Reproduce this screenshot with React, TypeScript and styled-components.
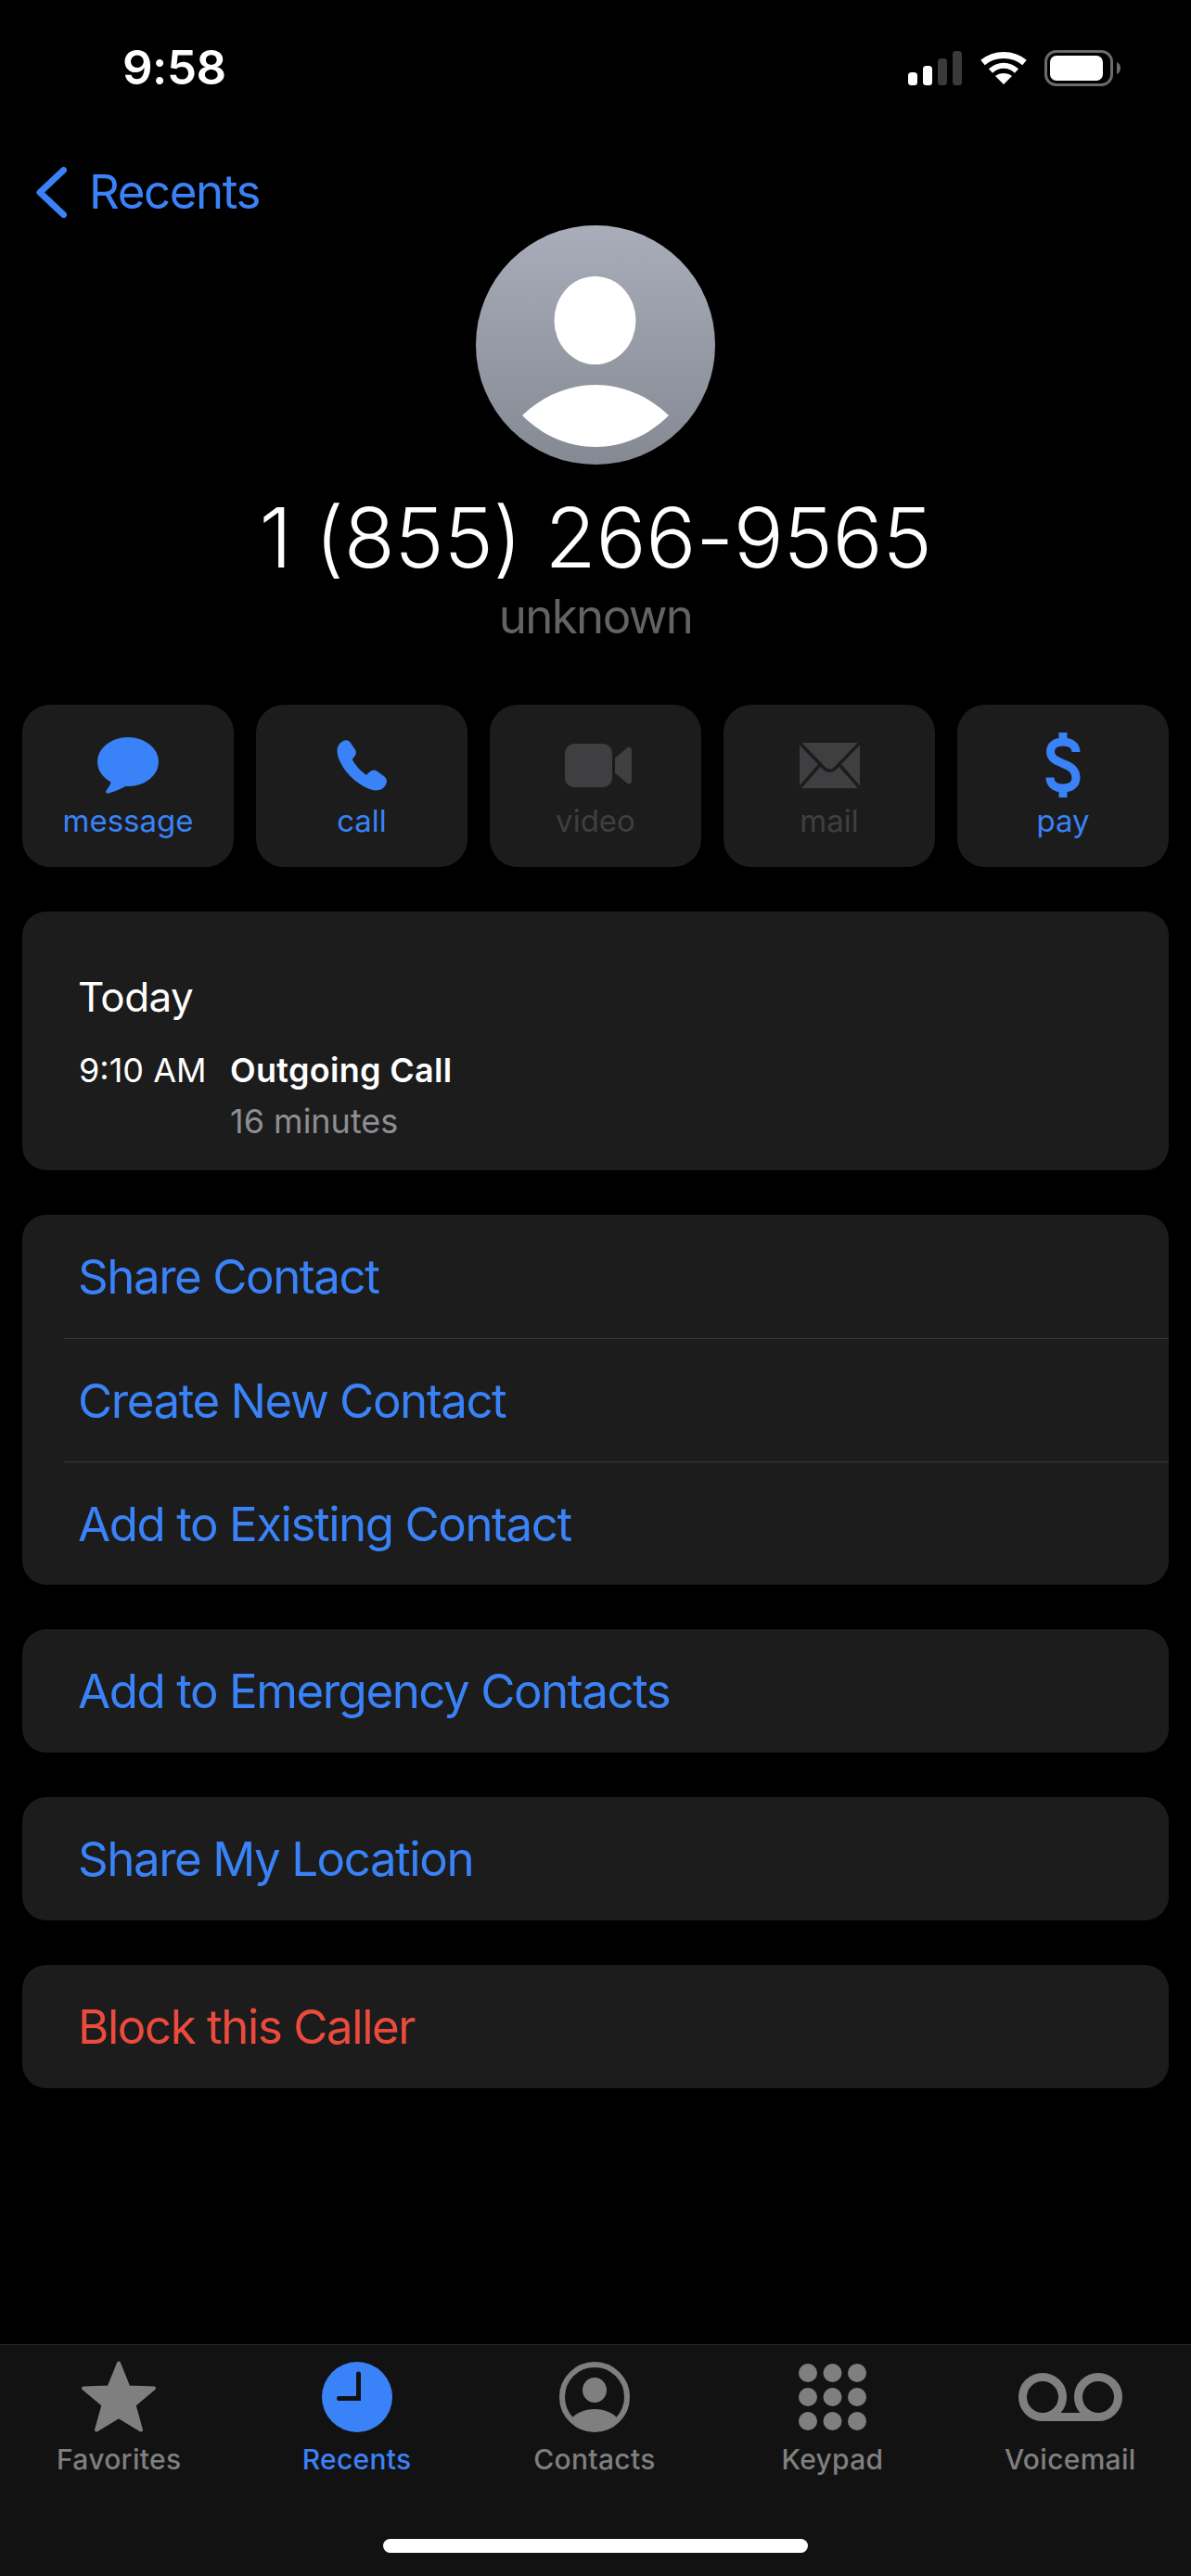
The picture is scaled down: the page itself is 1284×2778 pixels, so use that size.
import React from "react";
import styled, { createGlobalStyle } from "styled-components";

const BLUE = "#3a82f7";
const CARD = "#1c1c1c";
const MUTED = "#3f3f41";
const TAB_GREY = "#7f7f7f";

const Global = createGlobalStyle`
  html, body { margin: 0; padding: 0; background: #000; }
  * { box-sizing: border-box; }
`;

const Page = styled.div`
  width: 1284px;
  height: 2778px;
  display: flex;
  flex-direction: column;
  overflow: hidden;
  background: #000;
  font-family: Inter, "Liberation Sans", sans-serif;
  color: #fff;
`;

const StatusBar = styled.header`
  height: 146px;
  flex: none;
  display: flex;
  align-items: center;
  justify-content: space-between;
  padding: 0 76px 0 132px;
`;

const Clock = styled.span`
  font-size: 51px;
  font-weight: 600;
  line-height: 60px;
  letter-spacing: -0.5px;
`;

const StatusIcons = styled.div`
  display: flex;
  align-items: center;
  gap: 20px;
`;

const NavBar = styled.nav`
  flex: none;
  height: 97px;
  padding: 25px 0 0 39px;
  display: flex;
  align-items: center;
  gap: 24px;
  color: ${BLUE};
`;

const NavLabel = styled.span`
  font-size: 51px;
  line-height: 72px;
  letter-spacing: -1.4px;
`;

const Hero = styled.section`
  flex: none;
  display: flex;
  flex-direction: column;
  align-items: center;
`;

const PhoneNumber = styled.h1`
  margin: 29px 0 0;
  font-size: 90px;
  font-weight: 350;
  line-height: 100px;
  letter-spacing: -0.3px;
`;

const Subtitle = styled.div`
  margin-top: 5px;
  font-size: 51px;
  line-height: 60px;
  letter-spacing: -1.6px;
  color: #636366;
`;

const Actions = styled.div`
  flex: none;
  margin-top: 65px;
  padding: 0 24px;
  display: grid;
  grid-template-columns: repeat(5, 1fr);
  gap: 24px;
`;

const ActionButton = styled.div<{ $off?: boolean }>`
  height: 175px;
  padding-top: 30px;
  border-radius: 30px;
  background: ${CARD};
  display: flex;
  flex-direction: column;
  align-items: center;
  color: ${(p) => (p.$off ? MUTED : BLUE)};
`;

const ActionIcon = styled.div`
  height: 70px;
  display: flex;
  align-items: center;
  justify-content: center;
`;

const ActionLabel = styled.span`
  padding-top: 3px;
  font-size: 33px;
  line-height: 44px;
`;

const Card = styled.section`
  flex: none;
  margin: 48px 24px 0;
  border-radius: 26px;
  background: ${CARD};
  overflow: hidden;
`;

const History = styled.div`
  padding: 65px 0 31px 61px;
`;

const HistoryDay = styled.div`
  margin-left: -1px;
  font-size: 44px;
  line-height: 54px;
  letter-spacing: -0.6px;
`;

const CallEntry = styled.div`
  margin-top: 30px;
  display: grid;
  grid-template-columns: 163px 1fr;
  row-gap: 11px;
  font-size: 36px;
  line-height: 44px;
`;

const CallType = styled.span`
  font-weight: 600;
  letter-spacing: 0.3px;
`;

const CallLength = styled.span`
  grid-column: 2;
  color: #8e8e93;
`;

const Row = styled.div<{ $danger?: boolean }>`
  height: 133px;
  margin-left: 45px;
  padding-left: 15px;
  display: flex;
  align-items: center;
  font-size: 51px;
  letter-spacing: -1.45px;
  color: ${(p) => (p.$danger ? "#eb4a3c" : BLUE)};
  & + & {
    border-top: 1px solid #38383a;
  }
`;

const TabBar = styled.footer`
  flex: none;
  margin-top: auto;
  height: 250px;
  padding-top: 15px;
  background: #121212;
  border-top: 1px solid #2a2a2c;
`;

const Tabs = styled.div`
  padding-right: 2px;
  display: grid;
  grid-template-columns: repeat(5, 1fr);
`;

const Tab = styled.div<{ $active?: boolean }>`
  display: flex;
  flex-direction: column;
  align-items: center;
  color: ${(p) => (p.$active ? BLUE : TAB_GREY)};
`;

const TabIcon = styled.div`
  height: 81px;
  display: flex;
  align-items: center;
  justify-content: center;
`;

const TabLabel = styled.span`
  margin-top: 9px;
  font-size: 30px;
  font-weight: 500;
  line-height: 36px;
  letter-spacing: 0.3px;
`;

const HomeBar = styled.div`
  width: 458px;
  height: 15px;
  margin: 68px auto 0;
  border-radius: 8px;
  background: #fff;
`;

const Signal = () => (
  <svg width="58" height="37" viewBox="0 0 58 37">
    <rect x="0" y="23" width="10" height="14" rx="3.5" fill="#fff" />
    <rect x="16" y="16" width="10" height="21" rx="3.5" fill="#fff" />
    <rect x="32" y="8" width="10" height="29" rx="3.5" fill="#3a3a3a" />
    <rect x="48" y="0" width="10" height="37" rx="3.5" fill="#3a3a3a" />
  </svg>
);

const Wifi = () => (
  <svg width="50" height="35" viewBox="0 0 50 35" fill="none" stroke="#fff">
    <path d="M2.5 11.5C8.5 6.5 16.5 3.5 25 3.5C33.5 3.5 41.5 6.5 47.5 11.5" strokeWidth="7" />
    <path d="M11 20.5C15 16.8 20 14.8 25 14.8C30 14.8 35 16.8 39 20.5" strokeWidth="6" />
    <path d="M25 35L16 26C18.5 24 21.5 23 25 23C28.5 23 31.5 24 34 26Z" fill="#fff" stroke="none" />
  </svg>
);

const Battery = () => (
  <svg width="82" height="39" viewBox="0 0 82 39" style={{ marginLeft: -1 }}>
    <rect x="1.5" y="1.5" width="71" height="36" rx="11" fill="none" stroke="#6b6b6b" strokeWidth="3" />
    <rect x="6" y="6" width="57" height="27" rx="7" fill="#fff" />
    <path d="M78 13C80.5 14 82 16.5 82 19.5C82 22.5 80.5 25 78 26Z" fill="#6b6b6b" />
  </svg>
);

const Chevron = () => (
  <svg width="33" height="55" viewBox="0 0 33 55" fill="none" stroke="currentColor" strokeWidth="7" strokeLinecap="round" strokeLinejoin="round">
    <path d="M29.5 3.5L4 27.5L29.5 51.5" />
  </svg>
);

const Avatar = () => (
  <svg width="258" height="258" viewBox="0 0 258 258">
    <defs>
      <linearGradient id="avatarFill" x1="0" y1="0" x2="0" y2="1">
        <stop offset="0" stopColor="#a9adb9" />
        <stop offset="1" stopColor="#858993" />
      </linearGradient>
    </defs>
    <circle cx="129" cy="129" r="129" fill="url(#avatarFill)" />
    <ellipse cx="128.5" cy="102.5" rx="44" ry="47.5" fill="#fff" />
    <path d="M50 205C72 184 100 172 129 172C158 172 186 184 208 205C186 227 158 239 129 239C100 239 72 227 50 205Z" fill="#fff" />
  </svg>
);

const MessageIcon = () => (
  <svg width="66" height="61" viewBox="0 0 66 61" fill="currentColor">
    <ellipse cx="33" cy="26.5" rx="33" ry="26.5" />
    <path d="M15 46C14.5 51 11.5 55 9.5 57.5C8.5 59.8 10 61 12 60.5C18 59 25 56 31 52.5Z" />
  </svg>
);

const CallIcon = () => (
  <svg width="55" height="56" viewBox="0 -1 55 56" fill="currentColor">
    <path d="M0.5 12C0.5 7 3 2.5 8 0.7C10.5 -0.2 12.8 0.6 14.5 2.5L20 10.5C21.5 13 21 16 19 18L16.7 21C18.5 24.5 21 27.5 23.5 30.5C26 33 29 35.8 32 37.8L35.5 34.5C37.5 32.3 40.5 31.8 43 33.3L51.5 39.5C53.5 41 54.5 44 53.7 46.5C52 51.5 47.5 54.5 42 54.5C34 54 24 48 16.5 40.8C8 33 0.7 21 0.5 12Z" />
  </svg>
);

const VideoIcon = () => (
  <svg width="78" height="47" viewBox="-6 0 78 47" fill="currentColor">
    <rect x="0" y="0" width="51" height="47" rx="10" />
    <path d="M54 15.5L67 4.5C69 3 72 4 72 7V40C72 43 69 44 67 42.5L54 31.5Z" />
  </svg>
);

const MailIcon = () => (
  <svg width="65" height="49" viewBox="0 0 65 49">
    <rect width="65" height="49" rx="3" fill="currentColor" />
    <g fill="none" stroke={CARD} strokeWidth="3.5" strokeLinejoin="round">
      <path d="M-1 -1L27 28C30 31 35 31 38 28L66 -1" />
      <path d="M-1 50L22.5 23" />
      <path d="M66 50L42.5 23" />
    </g>
  </svg>
);

const PayIcon = () => (
  <svg width="38" height="70" viewBox="-1 0 38 70" fill="none" stroke="currentColor" strokeWidth="9">
    <path d="M18 0V10M18 60V70" />
    <path d="M32 21C32 14 26 10 18 10C10 10 4.5 14 4.5 20.5C4.5 28 11 30.5 18 33.5C26 36.5 32 40 32 49C32 56 26 60 18 60C10 60 4 56 4 48.5" />
  </svg>
);

const StarIcon = () => (
  <svg width="82" height="77" viewBox="0 0 82 77" fill="currentColor" stroke="currentColor" strokeWidth="4" strokeLinejoin="round">
    <polygon points="41,2.5 51.5,28.5 79,29.5 57.5,47.5 65,74.5 41,60 17,74.5 24.5,47.5 3,29.5 30.5,28.5" />
  </svg>
);

const ClockIcon = () => (
  <svg width="76" height="76" viewBox="0 0 76 76">
    <circle cx="38" cy="38" r="38" fill="currentColor" />
    <path d="M39.5 13V39.5H18.5" fill="none" stroke="#121212" strokeWidth="5" strokeLinecap="round" />
  </svg>
);

const ContactIcon = () => (
  <svg width="76" height="76" viewBox="0 0 76 76" fill="currentColor">
    <circle cx="38" cy="38" r="35" fill="none" stroke="currentColor" strokeWidth="6" />
    <ellipse cx="38" cy="30.5" rx="13" ry="13.5" />
    <path d="M12.5 62C18 55 27 51 38 51C49 51 58 55 63.5 62C57 69.5 48 74 38 74C28 74 19 69.5 12.5 62Z" />
  </svg>
);

const KeypadIcon = () => (
  <svg width="73" height="72" viewBox="0 0 73 72" fill="currentColor">
    {[10, 36, 62].map((cy) =>
      [10, 36.5, 63].map((cx) => <circle key={`${cx}-${cy}`} cx={cx} cy={cy} r="10" />)
    )}
  </svg>
);

const VoicemailIcon = () => (
  <svg width="112" height="52" viewBox="0 0 112 52" fill="none" stroke="currentColor" strokeWidth="9">
    <circle cx="26" cy="26" r="21.5" />
    <circle cx="86" cy="26" r="21.5" />
    <path d="M26 47.5H86" />
  </svg>
);

const actions = [
  { label: "message", icon: <MessageIcon /> },
  { label: "call", icon: <CallIcon /> },
  { label: "video", icon: <VideoIcon />, off: true },
  { label: "mail", icon: <MailIcon />, off: true },
  { label: "pay", icon: <PayIcon /> },
];

const tabs = [
  { label: "Favorites", icon: <StarIcon /> },
  { label: "Recents", icon: <ClockIcon />, active: true },
  { label: "Contacts", icon: <ContactIcon /> },
  { label: "Keypad", icon: <KeypadIcon /> },
  { label: "Voicemail", icon: <VoicemailIcon /> },
];

export default function App() {
  return (
    <Page>
      <Global />
      <StatusBar>
        <Clock>9:58</Clock>
        <StatusIcons>
          <Signal />
          <Wifi />
          <Battery />
        </StatusIcons>
      </StatusBar>
      <NavBar>
        <Chevron />
        <NavLabel>Recents</NavLabel>
      </NavBar>
      <Hero>
        <Avatar />
        <PhoneNumber>1 (855) 266-9565</PhoneNumber>
        <Subtitle>unknown</Subtitle>
      </Hero>
      <Actions>
        {actions.map((a) => (
          <ActionButton key={a.label} $off={a.off}>
            <ActionIcon>{a.icon}</ActionIcon>
            <ActionLabel>{a.label}</ActionLabel>
          </ActionButton>
        ))}
      </Actions>
      <Card>
        <History>
          <HistoryDay>Today</HistoryDay>
          <CallEntry>
            <span>9:10 AM</span>
            <CallType>Outgoing Call</CallType>
            <CallLength>16 minutes</CallLength>
          </CallEntry>
        </History>
      </Card>
      <Card>
        <Row>Share Contact</Row>
        <Row>Create New Contact</Row>
        <Row>Add to Existing Contact</Row>
      </Card>
      <Card>
        <Row>Add to Emergency Contacts</Row>
      </Card>
      <Card>
        <Row>Share My Location</Row>
      </Card>
      <Card>
        <Row $danger>Block this Caller</Row>
      </Card>
      <TabBar>
        <Tabs>
          {tabs.map((t) => (
            <Tab key={t.label} $active={t.active}>
              <TabIcon>{t.icon}</TabIcon>
              <TabLabel>{t.label}</TabLabel>
            </Tab>
          ))}
        </Tabs>
        <HomeBar />
      </TabBar>
    </Page>
  );
}
